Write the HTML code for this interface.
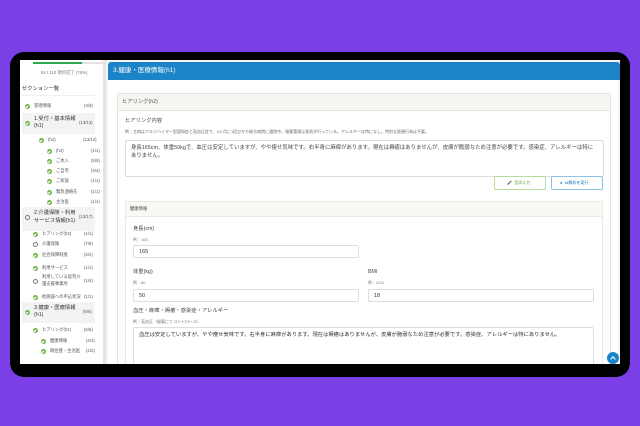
<!DOCTYPE html>
<html><head><meta charset="utf-8"><style>
*{margin:0;padding:0;box-sizing:border-box}
body{width:640px;height:426px;background:#7b3fe6;position:relative;overflow:hidden;font-family:"Liberation Sans","Noto Sans CJK JP",sans-serif;color:#333}
.a{position:absolute;white-space:nowrap}
#frame{left:10px;top:52px;width:620px;height:325px;background:#000;border-radius:14px}
#screen{left:20px;top:60px;width:600px;height:304px;background:#fff;overflow:hidden}
.t{position:absolute;white-space:nowrap;font-size:5px;color:#555;line-height:1}
.dot{position:absolute;width:5px;height:5px;border-radius:50%;background:#6cb33f}
.dot::after{content:"";position:absolute;left:1.4px;top:1px;width:1.2px;height:2px;border:solid #fff;border-width:0 .7px .7px 0;transform:rotate(45deg)}
.emp{position:absolute;width:5px;height:5px;border-radius:50%;border:.8px solid #777;background:#fff}
.hl{position:absolute;left:2px;width:73px;background:#f2f3f5}
.inp{position:absolute;border:1px solid #ddd;border-radius:2px;background:#fff;font-size:5.5px;color:#333;padding:3px 5px}
</style></head><body>
<div class="a" id="frame"></div>
<div class="a" id="screen">
 <div class="a" style="left:13px;top:2px;width:62px;height:2px;background:#2fa84f"></div>
 <div class="a" style="left:62px;top:2px;width:21px;height:2px;background:#e3e3e3"></div>
 <div class="t" style="left:21px;top:11px;font-size:4.3px;color:#777">84 / 110 項目完了 (76%)</div>
 <div class="t" style="left:2px;top:27px;font-size:5.3px;color:#333">セクション一覧</div>
 <div class="a" style="left:2px;top:35px;width:73px;height:1px;background:#eee"></div>
 <div class="a" style="left:83px;top:0;width:3px;height:304px;background:#e5e5e5"></div>

 <div class="dot" style="left:5px;top:44px"></div><div class="t" style="left:14px;top:44px;font-size:4.3px">管理情報</div><div class="t" style="left:64px;top:44px;font-size:4.3px">(3/3)</div>
 <div class="hl" style="top:53px;height:21px"></div>
 <div class="dot" style="left:5px;top:61px"></div><div class="t" style="left:14px;top:56px;font-size:5.3px;color:#333;line-height:1.4">1.受付・基本情報<br>(h1)</div><div class="t" style="left:59px;top:61px;font-size:4.3px">(13/13)</div>
 <div class="dot" style="left:19px;top:78px"></div><div class="t" style="left:28px;top:78px;font-size:4.3px">(h2)</div><div class="t" style="left:63px;top:78px;font-size:4.3px">(13/13)</div>
 <div class="dot" style="left:27px;top:89px"></div><div class="t" style="left:36px;top:89px;font-size:4.3px">(h3)</div><div class="t" style="left:71px;top:89px;font-size:4.3px">(1/1)</div>
 <div class="dot" style="left:27px;top:99px"></div><div class="t" style="left:36px;top:99px;font-size:4.3px">ご本人</div><div class="t" style="left:71px;top:99px;font-size:4.3px">(5/5)</div>
 <div class="dot" style="left:27px;top:109px"></div><div class="t" style="left:36px;top:109px;font-size:4.3px">ご自宅</div><div class="t" style="left:71px;top:109px;font-size:4.3px">(4/4)</div>
 <div class="dot" style="left:27px;top:119px"></div><div class="t" style="left:36px;top:119px;font-size:4.3px">ご家族</div><div class="t" style="left:71px;top:119px;font-size:4.3px">(1/1)</div>
 <div class="dot" style="left:27px;top:130px"></div><div class="t" style="left:36px;top:130px;font-size:4.3px">緊急連絡先</div><div class="t" style="left:71px;top:130px;font-size:4.3px">(1/1)</div>
 <div class="dot" style="left:27px;top:140px"></div><div class="t" style="left:36px;top:140px;font-size:4.3px">主治医</div><div class="t" style="left:71px;top:140px;font-size:4.3px">(1/1)</div>
 <div class="hl" style="top:147px;height:24px"></div>
 <div class="emp" style="left:5px;top:155px"></div><div class="t" style="left:14px;top:150px;font-size:5.3px;color:#333;line-height:1.45">2.介護保険・利用<br>サービス情報(h1)</div><div class="t" style="left:59px;top:155px;font-size:4.3px">(13/17)</div>
 <div class="dot" style="left:13px;top:172px"></div><div class="t" style="left:22px;top:172px;font-size:4.3px">ヒアリング(h3)</div><div class="t" style="left:64px;top:172px;font-size:4.3px">(1/1)</div>
 <div class="emp" style="left:13px;top:182px"></div><div class="t" style="left:22px;top:182px;font-size:4.3px">介護保険</div><div class="t" style="left:64px;top:182px;font-size:4.3px">(7/8)</div>
 <div class="dot" style="left:13px;top:193px"></div><div class="t" style="left:22px;top:193px;font-size:4.3px">社会保障制度</div><div class="t" style="left:64px;top:193px;font-size:4.3px">(2/2)</div>
 <div class="dot" style="left:13px;top:206px"></div><div class="t" style="left:22px;top:206px;font-size:4.3px">利用サービス</div><div class="t" style="left:64px;top:206px;font-size:4.3px">(1/1)</div>
 <div class="emp" style="left:13px;top:219px"></div><div class="t" style="left:22px;top:214px;font-size:4.3px;line-height:1.6">利用している居宅介<br>護支援事業所</div><div class="t" style="left:64px;top:219px;font-size:4.3px">(1/4)</div>
 <div class="dot" style="left:13px;top:235px"></div><div class="t" style="left:22px;top:235px;font-size:4.3px">他施設への申込状況</div><div class="t" style="left:64px;top:235px;font-size:4.3px">(1/1)</div>
 <div class="hl" style="top:242px;height:21px"></div>
 <div class="dot" style="left:5px;top:250px"></div><div class="t" style="left:14px;top:245px;font-size:5.3px;color:#333;line-height:1.4">3.健康・医療情報<br>(h1)</div><div class="t" style="left:63px;top:250px;font-size:4.3px">(6/6)</div>
 <div class="dot" style="left:13px;top:268px"></div><div class="t" style="left:22px;top:268px;font-size:4.3px">ヒアリング(h2)</div><div class="t" style="left:64px;top:268px;font-size:4.3px">(6/6)</div>
 <div class="dot" style="left:21px;top:279px"></div><div class="t" style="left:30px;top:279px;font-size:4.3px">健康情報</div><div class="t" style="left:66px;top:279px;font-size:4.3px">(4/4)</div>
 <div class="dot" style="left:21px;top:289px"></div><div class="t" style="left:30px;top:289px;font-size:4.3px">既往歴・主治医</div><div class="t" style="left:66px;top:289px;font-size:4.3px">(2/2)</div>

 <div class="a" style="left:86px;top:0;width:514px;height:304px;background:#f4f4f4"></div>
 <div class="a" style="left:88px;top:2px;width:512px;height:18px;background:#1a84c6;border-radius:3px 3px 0 0"></div>
 <div class="t" style="left:93px;top:8px;font-size:6.5px;color:#fff">3.健康・医療情報(h1)</div>
 <div class="a" style="left:88px;top:20px;width:510px;height:284px;background:#fff"></div>
 <div class="a" style="left:97px;top:33px;width:494px;height:280px;border:1px solid #e6e2dc;border-radius:2px;background:#fff"></div>
 <div class="a" style="left:98px;top:34px;width:492px;height:17px;background:#f7f5f2;border-bottom:1px solid #e6e2dc"></div>
 <div class="t" style="left:102px;top:40px;font-size:5.3px">ヒアリング(h2)</div>
 <div class="t" style="left:105px;top:59px;font-size:5.3px;color:#444">ヒアリング内容</div>
 <div class="t" style="left:105px;top:70px;font-size:4px;color:#666">例：主病はアルツハイマー型認知症と高血圧症で、3ヶ月に1回ひかり総合病院に通院中。服薬管理は長男が行っている。アレルギーは特になし。特別な医療行為は不要。</div>
 <div class="inp" style="left:105px;top:80px;width:479px;height:37px;font-size:5.4px;line-height:8px;white-space:normal;color:#444">身長165cm、体重50kgで、血圧は安定していますが、やや痩せ気味です。右半身に麻痺があります。現在は褥瘡はありませんが、皮膚が脆弱なため注意が必要です。感染症、アレルギーは特にありません。</div>
 <div class="a" style="left:474px;top:116px;width:52px;height:14px;border:1px solid #b8dca0;border-radius:2px;background:#fff"></div>
 <div class="t" style="left:487px;top:121px;font-size:4px;color:#5a9c2e">🎤&nbsp; 音声入力</div>
 <div class="a" style="left:531px;top:116px;width:52px;height:14px;border:1px solid #8cc2e8;border-radius:2px;background:#fff"></div>
 <div class="t" style="left:540px;top:121px;font-size:4px;color:#1a6fb0">● &nbsp;AI解析を実行</div>

 <div class="a" style="left:105px;top:141px;width:478px;height:170px;border:1px solid #ece8e2;border-radius:2px;background:#fff"></div>
 <div class="a" style="left:106px;top:142px;width:476px;height:15px;background:#faf8f5;border-bottom:1px solid #ece8e2"></div>
 <div class="t" style="left:110px;top:147px;font-size:4.3px;color:#444">健康情報</div>
 <div class="t" style="left:113px;top:167px;font-size:5.3px;color:#444">身長(cm)</div>
 <div class="t" style="left:113px;top:178px;font-size:4px;color:#777">例：165</div>
 <div class="inp" style="left:113px;top:185px;width:226px;height:13px">165</div>
 <div class="t" style="left:113px;top:210px;font-size:5.3px;color:#444">体重(kg)</div>
 <div class="t" style="left:113px;top:221px;font-size:4px;color:#777">例：60</div>
 <div class="inp" style="left:113px;top:229px;width:226px;height:13px">50</div>
 <div class="t" style="left:348px;top:210px;font-size:5.3px;color:#444">BMI</div>
 <div class="t" style="left:348px;top:221px;font-size:4px;color:#777">例：22.6</div>
 <div class="inp" style="left:348px;top:229px;width:226px;height:13px">18</div>
 <div class="t" style="left:113px;top:249px;font-size:5.3px;color:#444">血圧・麻痺・褥瘡・感染症・アレルギー</div>
 <div class="t" style="left:113px;top:260px;font-size:4px;color:#777">例：高血圧（服薬にてコントロール）</div>
 <div class="inp" style="left:113px;top:267px;width:461px;height:40px;font-size:5.3px;line-height:8px">血圧は安定していますが、やや痩せ気味です。右半身に麻痺があります。現在は褥瘡はありませんが、皮膚が脆弱なため注意が必要です。感染症、アレルギーは特にありません。</div>
 <div class="a" style="left:587px;top:292px;width:12px;height:12px;border-radius:50%;background:#1a84c6"></div>
 <div class="a" style="left:591px;top:297px;width:4px;height:4px;border:solid #fff;border-width:1px 0 0 1px;transform:rotate(45deg)"></div>
</div>
</body></html>
